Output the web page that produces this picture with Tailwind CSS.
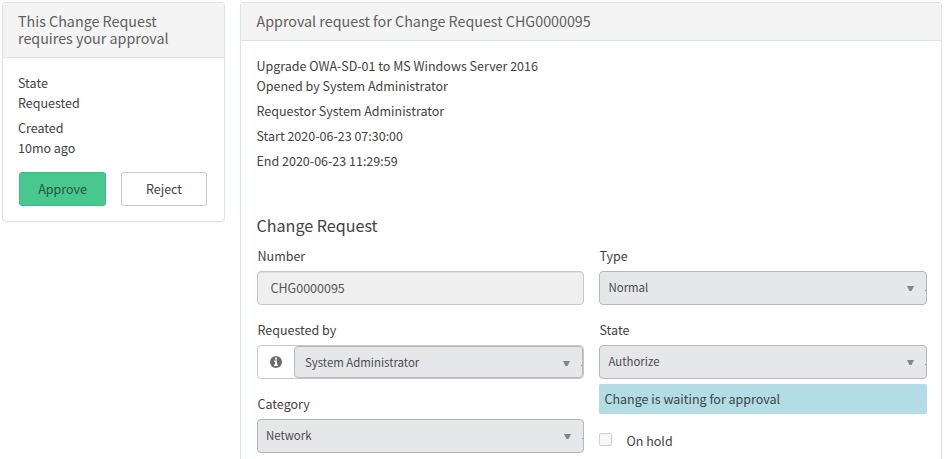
<!DOCTYPE html>
<html lang="en">
<head>
<meta charset="utf-8">
<title>Approval request</title>
<script src="https://cdn.jsdelivr.net/npm/@tailwindcss/browser@4"></script>
</head>
<body class="flex h-[459px] w-[944px] items-start gap-[15px] overflow-hidden bg-white pt-[2px] pl-[2px] font-['Noto_Sans_CJK_SC','Noto_Sans',sans-serif] text-[12.5px] leading-5 text-[#424242]">
  <aside class="h-[220px] w-[223px] shrink-0 overflow-hidden rounded-[4px] border border-[#dae4e4] shadow-[0_1px_1px_rgba(0,0,0,0.04)]">
    <h2 class="h-[55px] border-b border-[#dae4e4] bg-[#f4f4f4] pt-[9px] pl-[15px] text-[14.3px] leading-[17px] text-[#606060]">This Change Request<br>requires your approval</h2>
    <div class="px-[15px] pt-[15px]">
      <p>State</p>
      <p>Requested</p>
      <p class="mt-[5px]">Created</p>
      <p>10mo ago</p>
      <div class="mt-[14px] flex gap-[15px] pl-px">
        <button class="h-[34px] w-[87px] rounded-[3px] border border-[#3dbd84] bg-[#48c88f] text-[#2c5343]">Approve</button>
        <button class="h-[34px] w-[86px] rounded-[3px] border border-[#c8c8c8] bg-white">Reject</button>
      </div>
    </div>
  </aside>
  <main class="h-[457px] w-[702px] shrink-0 overflow-hidden rounded-t-[4px] border border-b-0 border-[#dae4e4]">
    <h2 class="h-[38px] border-b border-[#dae4e4] bg-[#f4f4f4] pt-[9px] pl-[15.5px] text-[14.3px] leading-[17px] text-[#606060]">Approval request for Change Request CHG0000095</h2>
    <div class="pr-[14px] pl-4">
      <div class="-ml-[0.5px] pt-[15px]">
        <p>Upgrade OWA-SD-01 to MS Windows Server 2016</p>
        <p>Opened by System Administrator</p>
        <p class="mt-[5px]">Requestor System Administrator</p>
        <p class="mt-[5px]">Start 2020-06-23 07:30:00</p>
        <p class="mt-[5px]">End 2020-06-23 11:29:59</p>
      </div>
      <h3 class="mt-[44px] -ml-[0.5px] text-[16.1px] leading-5">Change Request</h3>
      <div class="mt-[11px] flex gap-[15px]">
        <div class="w-[327px]">
          <label class="block h-[25px] pl-[0.5px]">Number</label>
          <div class="h-[34px] rounded-[4px] border border-[#c8c8c8] bg-[#efefef] pl-[12.5px] leading-[31px] text-[#555] shadow-[inset_0_1px_1px_rgba(0,0,0,0.06)]">CHG0000095</div>
          <label class="mt-[15px] block h-[25px] pl-[0.5px]">Requested by</label>
          <div class="flex h-[34px] rounded-[4px] border border-[#c8c8c8]">
            <div class="flex w-9 items-center justify-center">
              <svg class="h-3 w-3" viewBox="0 0 12 12"><circle cx="6" cy="6" r="6" fill="#6c6c6c"/><path d="M5 1.500h2v2H5zM4 4.500h3v4h1V10H4V8.500h1V6H4z" fill="#fff"/></svg>
            </div>
            <div class="relative flex h-[32px] flex-1 items-center justify-between rounded-[4px] border border-[#b5b7bd] bg-[#e6e7e9] pr-[12px] pl-[10px] text-[11.4px] text-[#4c4c4c]">System Administrator
              <svg class="mt-[3px] h-[5px] w-[7px]" viewBox="0 0 7 5"><path d="M0 0h7L4.500 5h-2z" fill="#858585"/></svg>
              <span class="absolute right-0 bottom-[11px] h-px w-px bg-[#9a9a9a]"></span>
            </div>
          </div>
          <label class="mt-[15px] block h-[25px] pl-[0.5px]">Category</label>
          <div class="relative flex h-[34px] items-center justify-between rounded-[4px] border border-[#b5b7bd] bg-[#e6e7e9] pr-[12px] pb-[2px] pl-[8px] text-[11.4px] text-[#4c4c4c]">Network
            <svg class="mt-[3px] h-[5px] w-[7px]" viewBox="0 0 7 5"><path d="M0 0h7L4.500 5h-2z" fill="#858585"/></svg>
            <span class="absolute right-0 bottom-[13px] h-px w-px bg-[#9a9a9a]"></span>
          </div>
        </div>
        <div class="w-[328px]">
          <label class="block h-[25px] pl-[0.5px]">Type</label>
          <div class="relative flex h-[34px] items-center justify-between rounded-[4px] border border-[#b5b7bd] bg-[#e6e7e9] pr-[12px] pb-[2px] pl-[8.5px] text-[11.4px] text-[#4c4c4c]">Normal
            <svg class="mt-[3px] h-[5px] w-[7px]" viewBox="0 0 7 5"><path d="M0 0h7L4.500 5h-2z" fill="#858585"/></svg>
            <span class="absolute right-0 bottom-[13px] h-px w-px bg-[#9a9a9a]"></span>
          </div>
          <label class="mt-[15px] block h-[25px] pl-[0.5px]">State</label>
          <div class="relative flex h-[34px] items-center justify-between rounded-[4px] border border-[#b5b7bd] bg-[#e6e7e9] pr-[12px] pb-[2px] pl-[8.5px] text-[11.4px] text-[#4c4c4c]">Authorize
            <svg class="mt-[3px] h-[5px] w-[7px]" viewBox="0 0 7 5"><path d="M0 0h7L4.500 5h-2z" fill="#858585"/></svg>
            <span class="absolute right-0 bottom-[13px] h-px w-px bg-[#9a9a9a]"></span>
          </div>
          <div class="mt-[5px] h-[30px] rounded-[2px] bg-[#b4dce4] pl-[5.5px] leading-[30px] text-[#3c4648]">Change is waiting for approval</div>
          <div class="mt-[17px] flex">
            <span class="mt-[2px] h-[13px] w-[13px] rounded-[2px] border border-[#cfcfcf] bg-[#f8f8f8]"></span>
            <span class="ml-[14.5px]">On hold</span>
          </div>
        </div>
      </div>
    </div>
  </main>
</body>
</html>
